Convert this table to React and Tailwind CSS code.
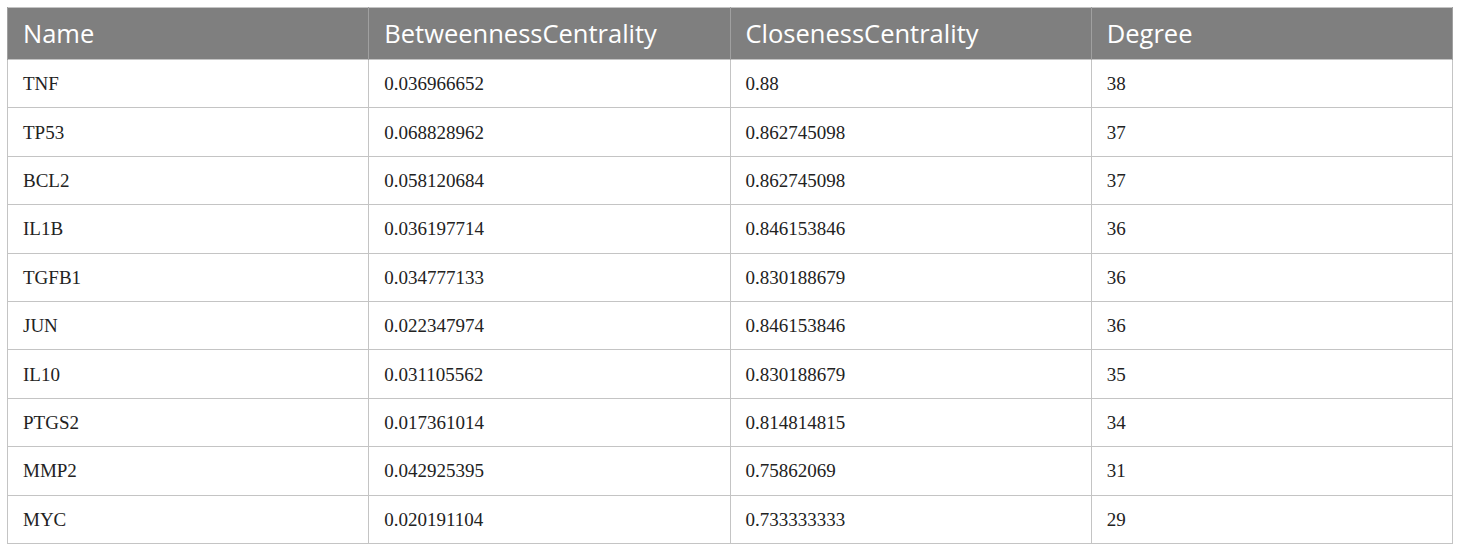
const rows = [
  ["TNF", "0.036966652", "0.88", "38"],
  ["TP53", "0.068828962", "0.862745098", "37"],
  ["BCL2", "0.058120684", "0.862745098", "37"],
  ["IL1B", "0.036197714", "0.846153846", "36"],
  ["TGFB1", "0.034777133", "0.830188679", "36"],
  ["JUN", "0.022347974", "0.846153846", "36"],
  ["IL10", "0.031105562", "0.830188679", "35"],
  ["PTGS2", "0.017361014", "0.814814815", "34"],
  ["MMP2", "0.042925395", "0.75862069", "31"],
  ["MYC", "0.020191104", "0.733333333", "29"],
];
const headers = ["Name", "BetweennessCentrality", "ClosenessCentrality", "Degree"];

export default function App() {
  return (
    <div className="w-[1460px] h-[550px] bg-white pt-[7px] pl-[7px]">
      <table className="w-[1446px] table-fixed border-collapse border border-[#c4c4c4]">
        <thead>
          <tr className="bg-[#7f7f7f] h-[52px]">
            {headers.map((h) => (
              <th
                key={h}
                className="text-left font-normal text-white text-[25.5px] pl-[15px] pt-[1px] border-x border-[#a0a0a0] align-middle leading-none"
                style={{ fontFamily: '"Open Sans", "Noto Sans", sans-serif' }}
              >
                {h}
              </th>
            ))}
          </tr>
        </thead>
        <tbody>
          {rows.map((r) => (
            <tr key={r[0]} className="h-[48.4px]">
              {r.map((c, i) => (
                <td
                  key={i}
                  className="border border-[#c4c4c4] pl-[15px] text-[19px] text-[#222] align-middle leading-none"
                  style={{ fontFamily: '"Liberation Serif", serif' }}
                >
                  {c}
                </td>
              ))}
            </tr>
          ))}
        </tbody>
      </table>
    </div>
  );
}
